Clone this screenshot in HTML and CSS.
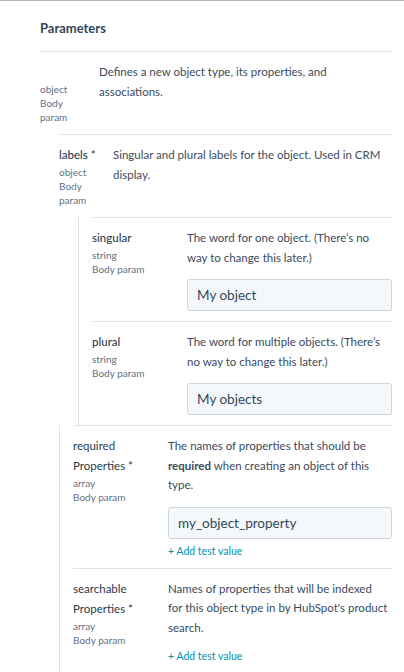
FILE: index.html
```html
<!DOCTYPE html>
<html lang="en">
<head>
<meta charset="utf-8">
<title>Parameters</title>
<link rel="stylesheet" href="styles.css">
</head>
<body>
<div class="page">
  <h2 class="title">Parameters</h2>

  <div class="row row--root">
    <div class="info info--root">
      <div class="name name--empty"></div>
      <div class="meta">object</div>
      <div class="meta">Body param</div>
    </div>
    <div class="body">
      <p class="desc">Defines a new object type, its properties, and<br>associations.</p>
    </div>
  </div>

  <div class="group">
    <div class="row">
      <div class="info info--labels">
        <div class="name">labels *</div>
        <div class="meta">object</div>
        <div class="meta">Body param</div>
      </div>
      <div class="body">
        <p class="desc">Singular and plural labels for the object. Used in CRM<br>display.</p>
      </div>
    </div>

    <div class="nested">
      <div class="row">
        <div class="info info--wide">
          <div class="name">singular</div>
          <div class="meta">string</div>
          <div class="meta">Body param</div>
        </div>
        <div class="body">
          <p class="desc">The word for one object. (There’s no<br>way to change this later.)</p>
          <div class="field">My object</div>
        </div>
      </div>
      <div class="row">
        <div class="info info--wide">
          <div class="name">plural</div>
          <div class="meta">string</div>
          <div class="meta">Body param</div>
        </div>
        <div class="body">
          <p class="desc">The word for multiple objects. (There’s<br>no way to change this later.)</p>
          <div class="field">My objects</div>
        </div>
      </div>
    </div>

    <div class="nested nested--flush">
      <div class="row">
        <div class="info info--wide">
          <div class="name name--medium">required<wbr>Properties *</div>
          <div class="meta">array</div>
          <div class="meta">Body param</div>
        </div>
        <div class="body">
          <p class="desc">The names of properties that should be<br><strong>required</strong> when creating an object of this<br>type.</p>
          <div class="field">my_object_property</div>
          <a class="add add--after-field" href="#">+ Add test value</a>
        </div>
      </div>
      <div class="row">
        <div class="info info--wide">
          <div class="name name--medium">searchable<wbr>Properties *</div>
          <div class="meta">array</div>
          <div class="meta">Body param</div>
        </div>
        <div class="body">
          <p class="desc">Names of properties that will be indexed<br>for this object type in by HubSpot's product<br>search.</p>
          <a class="add" href="#">+ Add test value</a>
        </div>
      </div>
    </div>
  </div>
</div>
</body>
</html>
```
FILE: styles.css
```css
* {
  box-sizing: border-box;
  margin: 0;
  padding: 0;
}

html, body {
  background: #ffffff;
}

body {
  margin: 0;
  font-family: Lato, "Noto Sans", "Liberation Sans", sans-serif;
  color: #33475b;
}

.page {
  border-top: 1px solid #b4b4b4;
  padding: 0 12px 0 40px;
  min-height: 672px;
}

.title {
  font-size: 13px;
  font-weight: 700;
  line-height: 20px;
  padding: 17px 0 13px;
  border-bottom: 1px solid #dfe3eb;
}

.row {
  display: flex;
  gap: 14px;
  padding: 10px 0;
  border-top: 1px solid #dfe3eb;
}

.row--root {
  border-top: none;
}

.info {
  flex: none;
}

.info--root {
  width: 45px;
}

.info--labels {
  width: 40px;
}

.info--wide {
  width: 81px;
}

.name {
  font-size: 11.5px;
  font-weight: 500;
  line-height: 20px;
  color: #2d3e50;
}

.name--medium {
  font-weight: 400;
  color: #2a394b;
}

.name--empty {
  height: 20px;
}

.meta {
  font-size: 10px;
  line-height: 14px;
  color: #617184;
}

.body {
  flex: 1;
  min-width: 0;
}

.desc {
  font-size: 11.5px;
  line-height: 19.5px;
  color: #3b4a5e;
  white-space: nowrap;
}

.desc strong {
  font-weight: 700;
}

.field {
  margin-top: 12px;
  height: 32px;
  padding: 0 9px;
  display: flex;
  align-items: center;
  background: #f5f8fa;
  border: 1px solid #cbd6e2;
  border-radius: 3px;
  font-size: 13.5px;
  color: #33475b;
}

.add {
  display: block;
  margin-top: 12px;
  font-size: 10.5px;
  line-height: 14px;
  color: #0091ae;
  text-decoration: none;
}

.add--after-field {
  margin-top: 5px;
}

.group {
  margin-left: 19px;
}

.nested {
  margin-left: 19px;
  border-left: 1px solid #dfe3eb;
  padding-left: 13px;
}

.nested--flush {
  margin-left: 0;
}
```
